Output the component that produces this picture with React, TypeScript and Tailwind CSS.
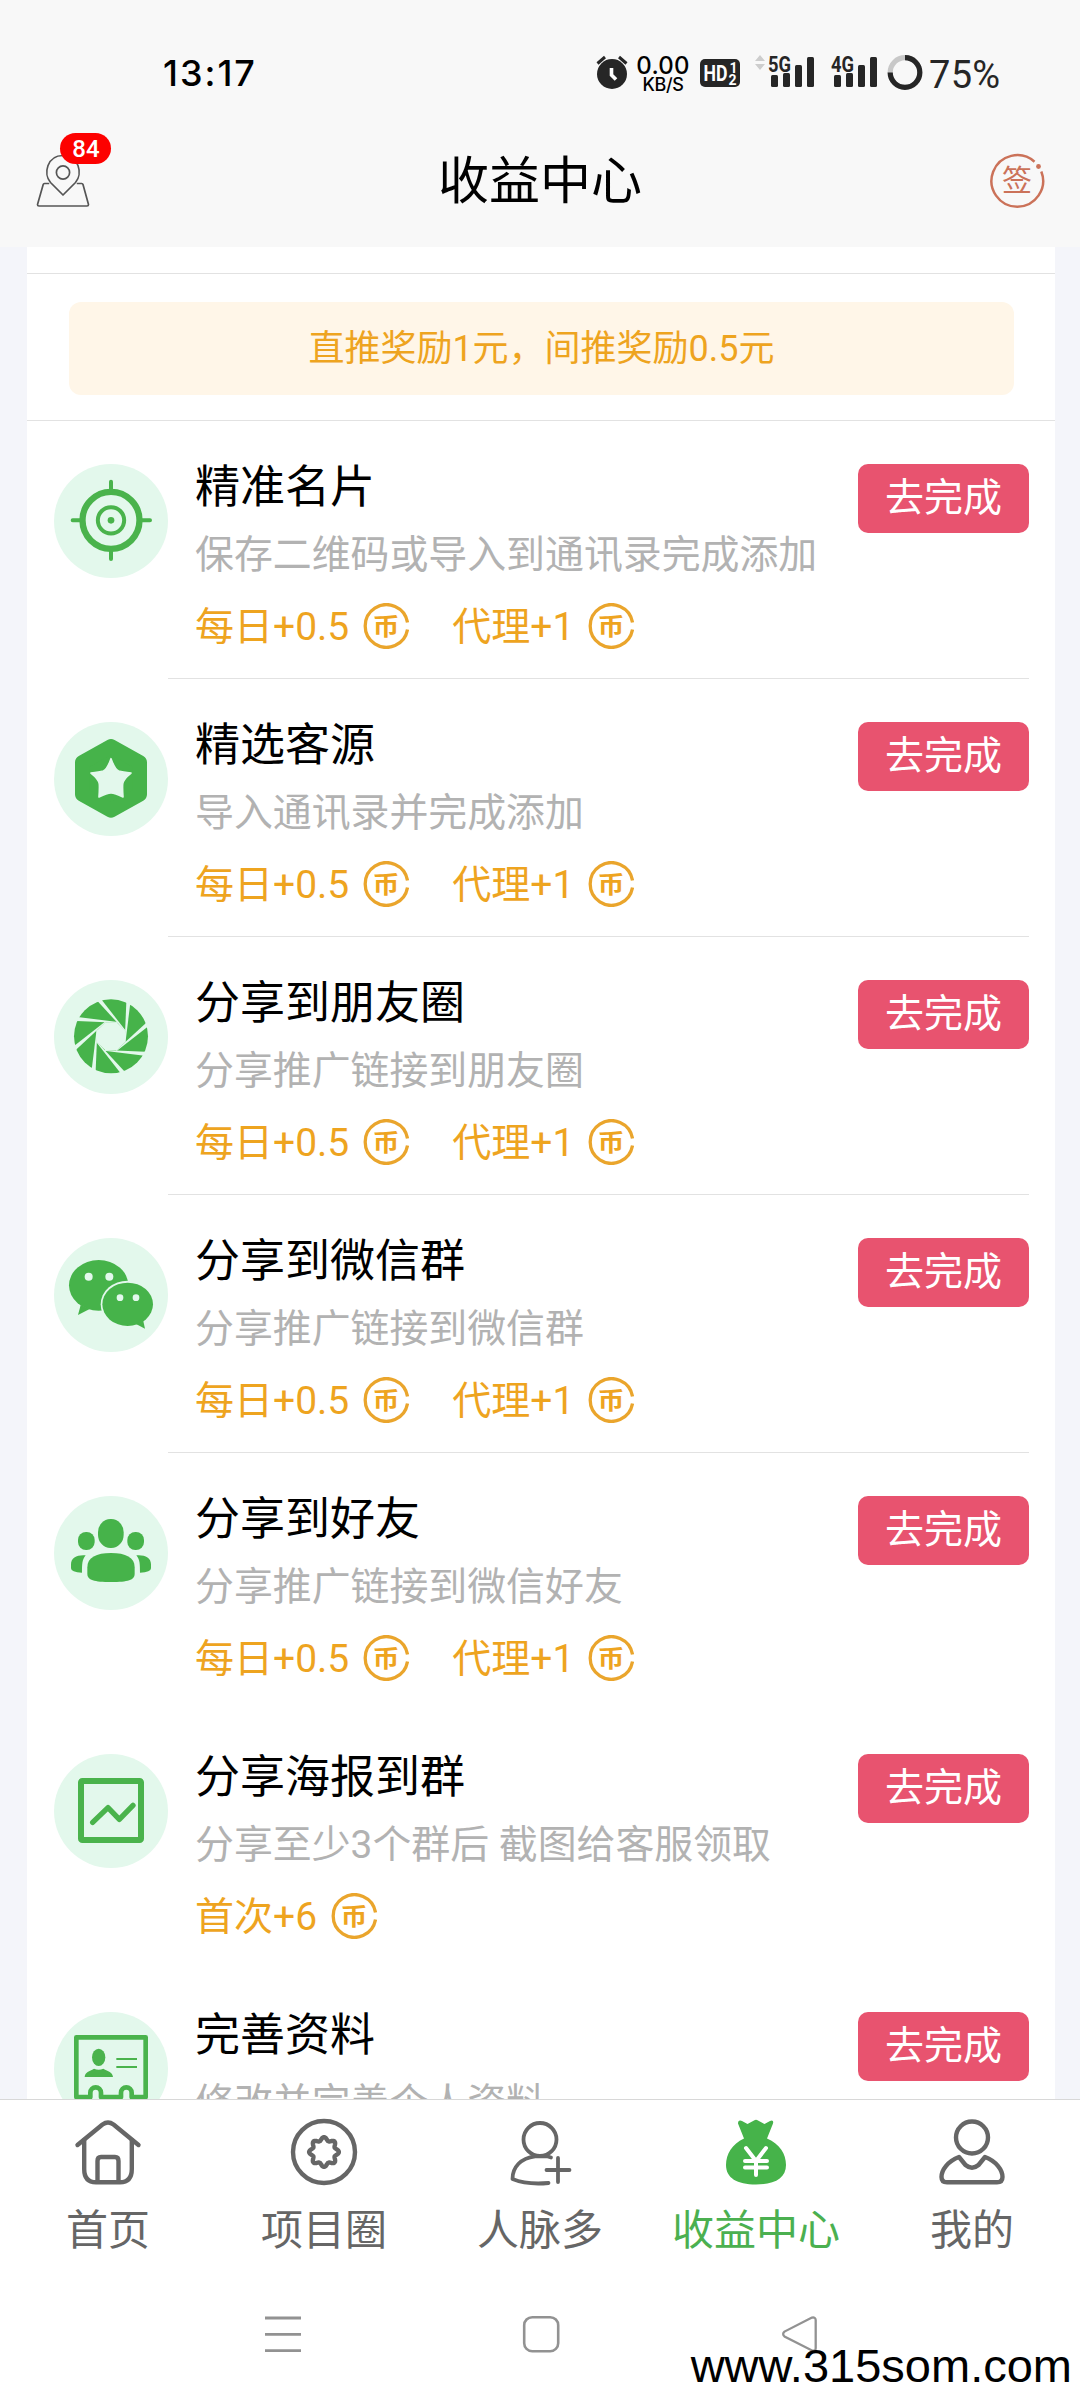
import type { ReactNode } from "react";

const LIGHT = "#e3f8ec";

function TargetIcon() {
  return (
    <g fill="none" stroke="#4ab34c" strokeWidth="12" strokeLinecap="round">
      <circle cx="171" cy="169" r="85.5" strokeWidth="19" />
      <circle cx="171" cy="169" r="39.5" />
      <circle cx="171" cy="169" r="10" fill="#4ab34c" stroke="none" />
      <path d="M171 53v30M171 255v30M56 169h24M262 169h26" />
    </g>
  );
}

function StarIcon() {
  return (
    <g strokeLinejoin="round">
      <path
        d="M171 73L257 121V217L171 265L85 217V121Z"
        fill="#46b34a"
        stroke="#46b34a"
        strokeWidth="44"
      />
      <path
        d="M171 110Q182 142 194 147Q206 150 231 153Q207 172 206 186Q205 200 207 225Q182 213 171 213Q160 213 135 225Q137 200 136 186Q135 172 111 153Q136 150 148 147Q160 142 171 110Z"
        fill={LIGHT}
        stroke={LIGHT}
        strokeWidth="5"
      />
    </g>
  );
}

function ApertureIcon() {
  return (
    <g>
      <circle cx="171" cy="169" r="111" fill="#46b34a" />
      <path d="M154 127H188L214 152V186L188 211H154L128 186V152Z" fill={LIGHT} />
      {[0, 45, 90, 135, 180, 225, 270, 315].map((a) => (
        <path key={a} d="M131 64L141 57L216 153L213 153Z" fill={LIGHT} transform={`rotate(${a} 171 169)`} />
      ))}
    </g>
  );
}

function WechatIcon() {
  return (
    <g fill="#46b34a">
      <ellipse cx="134" cy="142" rx="89" ry="76" />
      <path d="M80 201L72 231L107 213Z" />
      <ellipse cx="221" cy="199" rx="81" ry="71" fill={LIGHT} />
      <ellipse cx="221" cy="199" rx="76" ry="65" />
      <path d="M246 258L273 272L266 240Z" />
      <g fill={LIGHT}>
        <circle cx="104" cy="116" r="12" />
        <circle cx="166" cy="116" r="12" />
        <circle cx="198" cy="179" r="10" />
        <circle cx="246" cy="179" r="10" />
      </g>
    </g>
  );
}

function GroupIcon() {
  const side = "M95 178C70 176 51 184 51 205v12q0 12 33 13C84 205 84 192 95 178Z";
  return (
    <g fill="#46b34a">
      <rect x="132" y="69" width="77" height="87" rx="37" ry="40" />
      <rect x="72" y="108" width="50" height="54" rx="24" />
      <rect x="220" y="108" width="50" height="54" rx="24" />
      <path d="M171 171C215 171 242 184 242 214V233C242 252 222 258 171 258C120 258 100 252 100 233V214C100 184 127 171 171 171Z" />
      <path d={side} />
      <path d={side} transform="translate(342 0) scale(-1 1)" />
    </g>
  );
}

function PosterIcon() {
  return (
    <g fill="none" stroke="#4ab34c" strokeWidth="18" strokeLinecap="round" strokeLinejoin="round">
      <rect x="81" y="81" width="180" height="177" rx="4" />
      <path d="M116 205L162 161L196 196L237 154" strokeWidth="16" />
    </g>
  );
}

function ProfileIcon() {
  return (
    <g fill="none" stroke="#4ab34c" strokeLinejoin="round">
      <path
        d="M67 76H275V255H233V242a16 16 0 0 0-32 0V255H141V242a16 16 0 0 0-32 0V255H67Z"
        strokeWidth="14"
      />
      <path d="M187 141h62M187 165h62" strokeWidth="6" />
      <ellipse cx="134" cy="136" rx="20" ry="26" fill="#4ab34c" stroke="none" />
      <path d="M92 195C93 180 106 178 120 170Q134 176 148 170C162 178 176 180 177 195Z" fill="#4ab34c" stroke="none" />
    </g>
  );
}

type Task = { title: string; desc: string; rewards: string[]; icon: ReactNode; line?: boolean };

const TASKS: Task[] = [
  { title: "精准名片", desc: "保存二维码或导入到通讯录完成添加", rewards: ["每日+0.5", "代理+1"], icon: <TargetIcon />, line: true },
  { title: "精选客源", desc: "导入通讯录并完成添加", rewards: ["每日+0.5", "代理+1"], icon: <StarIcon />, line: true },
  { title: "分享到朋友圈", desc: "分享推广链接到朋友圈", rewards: ["每日+0.5", "代理+1"], icon: <ApertureIcon />, line: true },
  { title: "分享到微信群", desc: "分享推广链接到微信群", rewards: ["每日+0.5", "代理+1"], icon: <WechatIcon />, line: true },
  { title: "分享到好友", desc: "分享推广链接到微信好友", rewards: ["每日+0.5", "代理+1"], icon: <GroupIcon /> },
  { title: "分享海报到群", desc: "分享至少3个群后 截图给客服领取", rewards: ["首次+6"], icon: <PosterIcon /> },
  { title: "完善资料", desc: "修改并完善个人资料", rewards: [], icon: <ProfileIcon /> },
];

function Coin() {
  return (
    <svg viewBox="0 0 46 46" className="h-[46px] w-[46px] shrink-0" aria-hidden="true">
      <path d="M44.5 19.5A21.3 21.3 0 1 0 44.5 26.5" fill="none" stroke="#eaa52c" strokeWidth="3.3" />
      <text
        x="23"
        y="36"
        textAnchor="middle"
        fontSize="27"
        fontWeight="700"
        fill="#eea41f"
        transform="translate(0 1) scale(1 .87)"
      >
        币
      </text>
    </svg>
  );
}

function TaskRow({ task }: { task: Task }) {
  return (
    <div className="flex h-[258px] shrink-0 pr-[26px] pl-[27px]">
      <div className="mt-[43px] h-[114px] w-[114px] shrink-0 rounded-full bg-[#e3f8ec]">
        <svg viewBox="0 0 342 342" className="h-full w-full" aria-hidden="true">
          {task.icon}
        </svg>
      </div>
      <div
        className={`flex flex-1 justify-between border-b pt-[43px] pl-[27px] ${
          task.line ? "border-[#e2e2e2]" : "border-transparent"
        }`}
      >
        <div className="whitespace-nowrap">
          <h2 className="pt-[2px] text-[45px] leading-[44px] text-black">{task.title}</h2>
          <p className="mt-[23px] text-[38.9px] leading-[44px] text-[#b2b2b2]">{task.desc}</p>
          <div className="mt-[26px] flex h-[46px] items-center gap-[43px] text-[39px] leading-[44px] text-[#eea41f]">
            {task.rewards.map((r) => (
              <span key={r} className="flex items-center gap-[14px]">
                <span className="pt-px">{r}</span>
                <Coin />
              </span>
            ))}
          </div>
        </div>
        <button className="h-[69px] w-[171px] shrink-0 rounded-[10px] bg-[#e8536f] text-[39px] leading-[69px] text-white">
          去完成
        </button>
      </div>
    </div>
  );
}

function Signal({ label }: { label: string }) {
  return (
    <svg viewBox="0 0 47 36" className="h-[36px] w-[47px]" aria-hidden="true">
      <text x="0" y="17.5" fontSize="22" fontWeight="700" fill="#262626" textLength="23" lengthAdjust="spacingAndGlyphs">
        {label}
      </text>
      <g fill="#262626">
        <rect x="3" y="21" width="7" height="12" rx="1.5" />
        <rect x="15" y="19" width="7" height="14" rx="1.5" />
        <rect x="27" y="11" width="7" height="22" rx="1.5" />
        <rect x="39" y="3" width="7" height="30" rx="1.5" />
      </g>
    </svg>
  );
}

function StatusBar() {
  return (
    <div className="flex h-[114px] items-start pt-[54px] pl-[163px]">
      <span className="w-[433px] pt-px font-[Inter] text-[36px] leading-[36px] font-medium tracking-[2px] text-black">
        13:17
      </span>
      <svg viewBox="0 0 32 36" className="h-[36px] w-[32px]" aria-hidden="true">
        <circle cx="16" cy="20" r="15" fill="#262626" />
        <path d="M1.5 9.5L9 3M30.5 9.5L23 3" stroke="#262626" strokeWidth="3" />
        <path d="M15.5 14v7l4.5 4.5" fill="none" stroke="#fff" strokeWidth="3.6" />
      </svg>
      <div className="mt-[2px] ml-[8px] flex w-[54px] flex-col items-center font-[Inter] font-medium text-black">
        <span className="text-[24px] leading-[19px] tracking-[0.2px]">0.00</span>
        <span className="text-[18px] leading-[19px] tracking-[-0.4px]">KB/S</span>
      </div>
      <svg viewBox="0 0 40 36" className="ml-[10px] h-[36px] w-[40px]" aria-hidden="true">
        <rect y="5" width="40" height="28" rx="5" fill="#262626" />
        <g fill="#fff" fontWeight="700">
          <text x="3.5" y="26.5" fontSize="22" textLength="24" lengthAdjust="spacingAndGlyphs">
            HD
          </text>
          <text x="29.5" y="18.5" fontSize="14">
            1
          </text>
          <text x="28.5" y="30.5" fontSize="14">
            2
          </text>
        </g>
      </svg>
      <svg viewBox="0 0 12 36" className="ml-[14px] h-[36px] w-[12px]" aria-hidden="true">
        <path d="M6 1L11 7H1ZM6 16L11 10H1Z" fill="#cdcdcd" />
      </svg>
      <div className="ml-[2px] flex gap-[16px]">
        <Signal label="5G" />
        <Signal label="4G" />
      </div>
      <svg viewBox="0 0 36 37" className="ml-[9px] h-[37px] w-[36px]" aria-hidden="true">
        <circle cx="18" cy="18.5" r="14.8" fill="none" stroke="#c8c8c8" strokeWidth="5.2" />
        <path d="M18 3.7A14.8 14.8 0 1 1 3.2 18.5" fill="none" stroke="#262626" strokeWidth="5.2" />
      </svg>
      <span className="ml-[6px] pt-[3px] text-[38px] leading-[36px] tracking-[0.3px] text-[#262626]">75%</span>
    </div>
  );
}

function TitleBar() {
  return (
    <div className="flex h-[133px] items-center justify-between px-[36px]">
      <div className="relative h-[134px] w-[54px]">
        <svg viewBox="0 0 54 54" className="mt-[40px] h-[54px] w-[54px]" aria-hidden="true">
          <g fill="none" stroke="#555" strokeWidth="1.7" strokeLinejoin="round" strokeLinecap="round">
            <path d="M27 41L14.5 28.5C7 20 11 1.5 27 1.5S47 20 39.5 28.5Z" />
            <circle cx="27" cy="18.5" r="6.6" />
            <path d="M12.5 29.5H8.5Q7.5 29.5 7.2 30.5L1.5 50.5Q1.5 52 3 52H51Q52.5 52 52.5 50.5L47 30.5Q46.7 29.5 45.7 29.5H41.5" />
          </g>
        </svg>
        <span className="absolute top-[19px] left-[24px] h-[31px] w-[51px] rounded-full bg-[#fd0100] pl-px text-center text-[24px] leading-[33px] font-medium text-white">
          84
        </span>
      </div>
      <h1 className="pt-[2px] pl-px text-[51px] leading-[60px] text-black">收益中心</h1>
      <svg viewBox="0 0 56 56" className="-mt-px -mr-px h-[56px] w-[56px]" aria-hidden="true">
        <path d="M45.5 9.7A25.8 25.8 0 1 0 52.3 19.5" fill="none" stroke="#cb7259" strokeWidth="2.5" />
        <circle cx="49.5" cy="14.5" r="2.4" fill="#cb7259" />
        <text x="28" y="39" fontSize="30" textAnchor="middle" fill="#cb7259">
          签
        </text>
      </svg>
    </div>
  );
}

const scallop =
  Array.from({ length: 97 }, (_, i) => {
    const a = (i / 96) * Math.PI * 2;
    const r = 13.2 + 1.7 * Math.cos(8 * a);
    return `${i ? "L" : "M"}${(33 + r * Math.cos(a)).toFixed(2)} ${(33 + r * Math.sin(a)).toFixed(2)}`;
  }).join("") + "Z";

const TABS: { label: string; active?: boolean; icon: ReactNode }[] = [
  {
    label: "首页",
    icon: (
      <>
        <path d="M2.5 26L27.5 5.5Q33 1.5 38.5 5.5L63.5 26" />
        <path d="M9.2 21V50Q9.2 63.3 21 63.3H45Q56.8 63.3 56.8 50V21M22.5 63V42Q22.5 38 26 38H40Q43.5 38 43.5 42V63" />
      </>
    ),
  },
  {
    label: "项目圈",
    icon: (
      <>
        <circle cx="33" cy="33" r="31" />
        <path d={scallop} />
      </>
    ),
  },
  {
    label: "人脉多",
    icon: (
      <g strokeWidth="3.8">
        <circle cx="33" cy="20.5" r="16.5" />
        <path d="M44 38.500L40 37.300H28C14 39 5.500 48 5.500 60Q20 66 41.500 64M39.500 51H62.500M51 39V63" />
      </g>
    ),
  },
  {
    label: "收益中心",
    active: true,
    icon: (
      <>
        <path
          d="M21 19.5L15 4.5Q15 .5 19 2L24.500 5L31 1.500Q33 0 35 1.500L41.500 5L47 2Q51 .5 50 4.500L44 19.500C57 25 63 35 63 46C63 59 52 65.500 33 65.500S3 59 3 46C3 35 9 25 21 19.500Z"
          fill="#46b34a"
          stroke="none"
        />
        <path d="M23 29L33 42L43 29M33 42V56M22 42H44M22 48.500H44" stroke="#fff" strokeWidth="4" />
      </>
    ),
  },
  {
    label: "我的",
    icon: (
      <>
        <circle cx="33" cy="18.5" r="16" />
        <path d="M20 38C9 42 2.5 51 2.5 58Q2.5 63.3 8 63.3H58Q63.5 63.3 63.5 58C63.5 51 57 42 46 38L39.5 46Q33 51.5 26.5 46Z" />
      </>
    ),
  },
];

function TabBar() {
  return (
    <div className="flex h-[166px] shrink-0 border-t border-[#d8d8d8] bg-white">
      {TABS.map((t) => (
        <div
          key={t.label}
          className={`flex w-[216px] flex-col items-center pt-[19px] ${t.active ? "text-[#4bb050]" : "text-[#666]"}`}
        >
          <svg
            viewBox="0 0 66 66"
            className="h-[66px] w-[66px] overflow-visible"
            fill="none"
            stroke="currentColor"
            strokeWidth="4.4"
            strokeLinecap="round"
            strokeLinejoin="round"
            aria-hidden="true"
          >
            {t.icon}
          </svg>
          <span className="mt-[21px] text-[42px] leading-[50px]">{t.label}</span>
        </div>
      ))}
    </div>
  );
}

function SystemNav() {
  return (
    <div className="relative flex h-[135px] shrink-0 items-start bg-white pt-[50px] pl-[264px] text-[#929292]">
      <svg viewBox="0 0 38 38" className="h-[38px] w-[38px]" aria-hidden="true">
        <path d="M1 3H37M1 19.3H37M1 35.6H37" stroke="currentColor" strokeWidth="2.8" />
      </svg>
      <svg viewBox="0 0 38 38" className="ml-[220px] h-[38px] w-[38px]" aria-hidden="true">
        <rect x="2.2" y="2.2" width="34" height="34" rx="8" fill="none" stroke="currentColor" strokeWidth="2.6" />
      </svg>
      <svg viewBox="0 0 38 38" className="ml-[221px] h-[38px] w-[38px]" aria-hidden="true">
        <path
          d="M31 2.6L3.5 16.6Q.8 19 3.5 21.5L31 35.5Q34.7 36.5 34.7 33V5Q34.5 2 31 2.6Z"
          fill="none"
          stroke="currentColor"
          strokeWidth="2.3"
        />
      </svg>
      <span className="absolute top-[74px] right-[8px] font-['Liberation_Sans'] text-[47px] leading-[54px] text-black">
        www.315som.com
      </span>
    </div>
  );
}

export default function App() {
  return (
    <main className="flex h-[2400px] w-[1080px] flex-col overflow-hidden bg-[#f4f5fa] font-[Roboto,'Noto_Sans_CJK_SC',sans-serif]">
      <header className="h-[247px] shrink-0 bg-[#f8f8f8]">
        <StatusBar />
        <TitleBar />
      </header>

      <section className="mr-[25px] ml-[27px] flex min-h-0 flex-1 flex-col overflow-hidden bg-white">
        <div className="h-[27px] shrink-0 border-b border-[#e2e2e2]" />
        <div className="h-[147px] shrink-0 border-b border-[#e2e2e2] pt-[28px] pr-[41px] pl-[42px]">
          <p className="h-[93px] rounded-[12px] bg-[#fff6e8] text-center text-[36px] leading-[94px] text-[#eea41f]">
            直推奖励1元，间推奖励0.5元
          </p>
        </div>
        {TASKS.map((t) => (
          <TaskRow key={t.title} task={t} />
        ))}
      </section>

      <TabBar />
      <SystemNav />
    </main>
  );
}
